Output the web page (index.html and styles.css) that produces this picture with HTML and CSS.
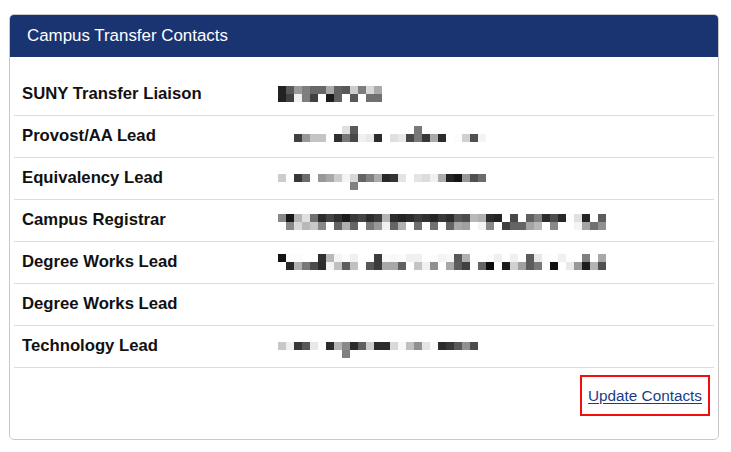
FILE: index.html
```html
<!DOCTYPE html>
<html lang="en">
<head>
<meta charset="utf-8">
<title>Campus Transfer Contacts</title>
<link rel="stylesheet" href="styles.css">
</head>
<body>
  <section class="card">
    <header class="card-header">Campus Transfer Contacts</header>
    <div class="card-body">
      <div class="contact-row">
        <div class="contact-role">SUNY Transfer Liaison</div>
        <div class="contact-name redacted" data-top="12" data-indent="0"
             data-rows="225a9a7e6868aa6258cc7ed8aa|2240f07e40ff1c62ff58ff7070"></div>
      </div>
      <div class="contact-row">
        <div class="contact-role">Provost/AA Lead</div>
        <div class="contact-name redacted" data-top="10" data-indent="2"
             data-rows="ffffffffffffe05affffffffffffff78ffffffffffffffff|4098c4c4ff307848f0e82cffe0e8487838aa2cfffcd050f4"></div>
      </div>
      <div class="contact-row">
        <div class="contact-role">Equivalency Lead</div>
        <div class="contact-name redacted" data-top="16" data-indent="0"
             data-rows="ccff386cff98a8ccf4d86480aa2834e4ffe4dcf0ac241498506c|ffffffffffffffffff80"></div>
      </div>
      <div class="contact-row">
        <div class="contact-role">Campus Registrar</div>
        <div class="contact-name redacted" data-top="14" data-indent="0"
             data-rows="8818b4e0702c44301c38442c3cb42c242c3c3024382c584cb8b02c24ff48ff60802c4c28fce024ff5c|ff88d8b8c888ff64b064ff7898f064b0ff70fc70ff64a8a0fff488ff406464a4b8ff88fffff4a47090"></div>
      </div>
      <div class="contact-row">
        <div class="contact-role">Degree Works Lead</div>
        <div class="contact-name redacted" data-top="12" data-indent="0"
             data-rows="14fcfcffff30b8f4fcf0ffff3cfaf8fcf0f0fffcf4f858b0fffffcf0fff0ff5ce8fcfff0ffff80ffa8|ff28b0784c2cf4c05cc0ff583ca8a860ffc4f090ffa85c40ff640cff1cd0a05c78fc10ffe8981cb450"></div>
      </div>
      <div class="contact-row">
        <div class="contact-role">Degree Works Lead</div>
        <div class="contact-name"></div>
      </div>
      <div class="contact-row">
        <div class="contact-role">Technology Lead</div>
        <div class="contact-name redacted" data-top="16" data-indent="0"
             data-rows="c8f03858e8fc2cb4882c60cc2c2cd8f8c090e4f82c3858904c|ffffffffffffffff80"></div>
      </div>
      <div class="card-actions">
        <span class="action-highlight"><a class="action-link" href="#">Update Contacts</a></span>
      </div>
    </div>
  </section>
  <script src="app.js"></script>
</body>
</html>
```

FILE: styles.css
```css
* {
  box-sizing: border-box;
}

html,
body {
  margin: 0;
  padding: 0;
  background: #ffffff;
}

body {
  padding: 14px 0 0 9px;
  font-family: "Liberation Sans", Arial, Helvetica, sans-serif;
  color: #111111;
}

.card {
  width: 710px;
  height: 426px;
  border: 1px solid #c9c9c9;
  border-radius: 5px;
  overflow: hidden;
  background: #ffffff;
}

.card-header {
  height: 42px;
  display: flex;
  align-items: center;
  padding: 0 17px 1px;
  background: #1a3472;
  color: #ffffff;
  font-size: 16.9px;
}

.card-body {
  padding: 17px 4px 0;
}

.contact-row {
  display: flex;
  align-items: center;
  height: 42px;
  padding-left: 8px;
  border-bottom: 1px solid #dcdcdc;
}

.contact-role {
  width: 256px;
  flex: none;
  font-size: 16.7px;
  font-weight: 700;
  color: #111111;
  padding-bottom: 1px;
}

.contact-name {
  align-self: flex-start;
  font-size: 15px;
}

.redacted {
  display: flex;
  flex-direction: column;
}

.mosaic-row {
  display: flex;
  height: 8px;
}

.mosaic-cell {
  width: 8px;
  height: 8px;
  flex: none;
}

.card-actions {
  display: flex;
  justify-content: flex-end;
  padding: 7px 4px 0 0;
}

.action-highlight {
  display: block;
  height: 41px;
  padding: 10px 6px;
  border: 2px solid #f20d0d;
  line-height: 17px;
}

.action-link {
  font-size: 15.3px;
  color: #1b3c85;
  text-decoration: underline;
  text-underline-offset: 2px;
}
```

FILE: app.js
```js
// Builds the pixelated name blocks from their grey-level data.
document.querySelectorAll('.redacted').forEach(function (el) {
  var top = parseInt(el.dataset.top || '0', 10);
  var indent = parseInt(el.dataset.indent || '0', 10);
  el.style.marginTop = top + 'px';
  el.style.marginLeft = (indent * 8) + 'px';
  el.dataset.rows.split('|').forEach(function (line) {
    var row = document.createElement('div');
    row.className = 'mosaic-row';
    for (var i = 0; i < line.length; i += 2) {
      var v = line.substr(i, 2);
      var cell = document.createElement('span');
      cell.className = 'mosaic-cell';
      cell.style.background = '#' + v + v + v;
      row.appendChild(cell);
    }
    el.appendChild(row);
  });
});
```
